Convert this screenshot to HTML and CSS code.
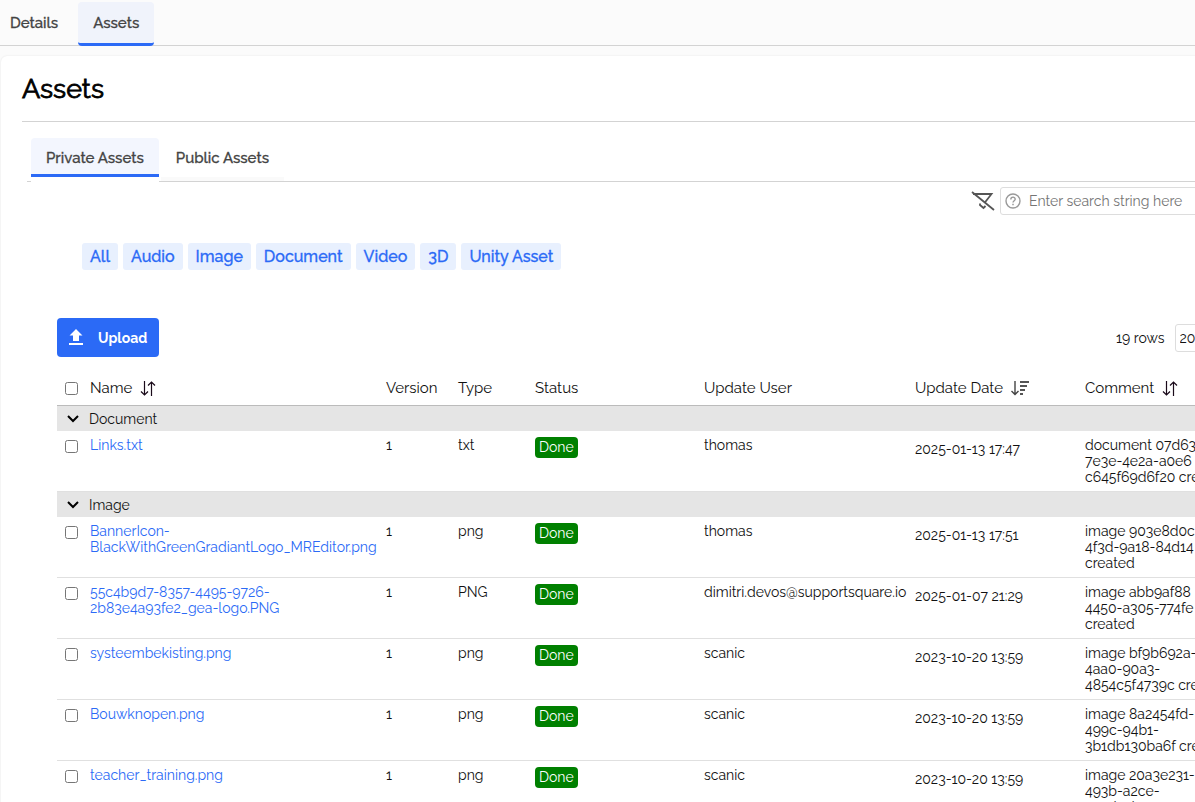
FILE: index.html
```html
<!DOCTYPE html>
<html lang="en">
<head>
<meta charset="UTF-8">
<meta name="viewport" content="width=device-width, initial-scale=1.0">
<title>Assets</title>
<link rel="stylesheet" href="styles.css">
</head>
<body>

<nav class="top-tabs">
    <a href="#details" class="top-tab">Details</a>
    <a href="#assets" class="top-tab active">Assets</a>
</nav>

<main class="panel">
    <h1>Assets</h1>

    <div class="sub-tabs">
        <button type="button" class="sub-tab active">Private Assets</button>
        <button type="button" class="sub-tab">Public Assets</button>
    </div>

    <form class="search" onsubmit="return false">
        <button type="button" class="icon-button" aria-label="Clear filter">
            <svg width="24" height="20" viewBox="0 0 24 20" fill="none" stroke="#555" stroke-width="1.800">
                <path d="M2 3H20.500L13.500 12M1 1L23 19M9 12.500V14L12.500 17L14.500 15"/>
            </svg>
        </button>
        <div class="search-box">
            <svg width="16" height="16" viewBox="0 0 16 16" fill="none" stroke="#999">
                <circle cx="8" cy="8" r="7" stroke-width="1.400"/>
                <path d="M5.800 6.400C5.800 3.400 10.300 3.500 10.200 6.200C10.100 7.700 8 7.800 8 9.600" stroke-width="1.400"/>
                <path d="M8 10.800V12.300" stroke-width="1.500"/>
            </svg>
            <input type="text" id="search" aria-label="Search" placeholder="Enter search string here">
        </div>
    </form>

    <div class="filters">
        <button type="button">All</button>
        <button type="button">Audio</button>
        <button type="button">Image</button>
        <button type="button">Document</button>
        <button type="button">Video</button>
        <button type="button">3D</button>
        <button type="button">Unity Asset</button>
    </div>

    <div class="toolbar">
        <button type="button" class="upload">
            <svg width="14" height="16" viewBox="0 0 14 16" fill="#fff">
                <path d="M7 0L13.500 6.500H10V12H4V6.500H0.500ZM0 14H14V16H0Z"/>
            </svg>
            Upload
        </button>
        <div class="paging">
            <label for="rows">19 rows</label>
            <select id="rows">
                <option>20</option>
                <option>50</option>
                <option>100</option>
            </select>
        </div>
    </div>

    <table class="assets">
        <colgroup>
            <col class="col-check">
            <col class="col-name">
            <col class="col-version">
            <col class="col-type">
            <col class="col-status">
            <col class="col-user">
            <col class="col-date">
            <col class="col-comment">
        </colgroup>
        <thead>
            <tr>
                <th class="check"><input type="checkbox" aria-label="Select all"></th>
                <th>Name
                    <svg class="sort" width="16" height="15" viewBox="0 0 16 15" fill="none" stroke="#1a0a1a" stroke-width="1.200">
                        <path d="M4.500 0V14M1 10.500L4.500 14L8 10.500M11.500 15V1M8 4.500L11.500 1L15 4.500"/>
                    </svg>
                </th>
                <th>Version</th>
                <th>Type</th>
                <th>Status</th>
                <th>Update User</th>
                <th>Update Date
                    <svg class="sort" width="18" height="15" viewBox="0 0 18 15" fill="none" stroke="#444">
                        <path d="M4 0V13M0.500 10L4 13.500L7.500 10" stroke-width="1.400"/>
                        <path d="M9 1H18M9 5H16M9 9H14M9 13H12" stroke="#555" stroke-width="1.800"/>
                    </svg>
                </th>
                <th>Comment
                    <svg class="sort" width="16" height="15" viewBox="0 0 16 15" fill="none" stroke="#1a0a1a" stroke-width="1.200">
                        <path d="M4.500 0V14M1 10.500L4.500 14L8 10.500M11.500 15V1M8 4.500L11.500 1L15 4.500"/>
                    </svg>
                </th>
            </tr>
        </thead>
        <tbody>
            <tr class="group">
                <td colspan="8">
                    <svg width="12" height="8" viewBox="0 0 12 8" fill="none" stroke="#000" stroke-width="2"><path d="M1 1L6 6L11 1"/></svg>Document
                </td>
            </tr>
            <tr>
                <td class="check"><input type="checkbox" aria-label="Select Links.txt"></td>
                <td><a href="#">Links.txt</a></td>
                <td>1</td>
                <td>txt</td>
                <td><span class="badge">Done</span></td>
                <td>thomas</td>
                <td class="date">2025-01-13 17:47</td>
                <td>document 07d63<br>7e3e-4e2a-a0e6<br>c645f69d6f20 created</td>
            </tr>
        </tbody>
        <tbody>
            <tr class="group">
                <td colspan="8">
                    <svg width="12" height="8" viewBox="0 0 12 8" fill="none" stroke="#000" stroke-width="2"><path d="M1 1L6 6L11 1"/></svg>Image
                </td>
            </tr>
            <tr>
                <td class="check"><input type="checkbox" aria-label="Select BannerIcon"></td>
                <td><a href="#">BannerIcon-<br>BlackWithGreenGradiantLogo_MREditor.png</a></td>
                <td>1</td>
                <td>png</td>
                <td><span class="badge">Done</span></td>
                <td>thomas</td>
                <td class="date">2025-01-13 17:51</td>
                <td>image 903e8d0c<br>4f3d-9a18-84d14<br>created</td>
            </tr>
            <tr>
                <td class="check"><input type="checkbox" aria-label="Select gea-logo"></td>
                <td><a href="#">55c4b9d7-8357-4495-9726-<br>2b83e4a93fe2_gea-logo.PNG</a></td>
                <td>1</td>
                <td>PNG</td>
                <td><span class="badge">Done</span></td>
                <td>dimitri.devos@supportsquare.io</td>
                <td class="date">2025-01-07 21:29</td>
                <td>image abb9af88<br>4450-a305-774fe<br>created</td>
            </tr>
            <tr>
                <td class="check"><input type="checkbox" aria-label="Select systeembekisting.png"></td>
                <td><a href="#">systeembekisting.png</a></td>
                <td>1</td>
                <td>png</td>
                <td><span class="badge">Done</span></td>
                <td>scanic</td>
                <td class="date">2023-10-20 13:59</td>
                <td>image bf9b692a-<br>4aa0-90a3-<br>4854c5f4739c created</td>
            </tr>
            <tr>
                <td class="check"><input type="checkbox" aria-label="Select Bouwknopen.png"></td>
                <td><a href="#">Bouwknopen.png</a></td>
                <td>1</td>
                <td>png</td>
                <td><span class="badge">Done</span></td>
                <td>scanic</td>
                <td class="date">2023-10-20 13:59</td>
                <td>image 8a2454fd-<br>499c-94b1-<br>3b1db130ba6f created</td>
            </tr>
            <tr>
                <td class="check"><input type="checkbox" aria-label="Select teacher_training.png"></td>
                <td><a href="#">teacher_training.png</a></td>
                <td>1</td>
                <td>png</td>
                <td><span class="badge">Done</span></td>
                <td>scanic</td>
                <td class="date">2023-10-20 13:59</td>
                <td>image 20a3e231-<br>493b-a2ce-<br>created</td>
            </tr>
        </tbody>
    </table>
</main>

</body>
</html>
```

FILE: styles.css
```css
* {
    box-sizing: border-box;
}

body {
    margin: 0;
    height: 100vh;
    overflow: hidden;
    background-color: #fbfbfb;
    color: #111;
    font-family: Raleway, Lato, sans-serif;
    font-size: 14px;
    font-variant-numeric: oldstyle-nums;
    line-height: 16px;
}

button,
input,
select {
    font-family: inherit;
    font-size: inherit;
    font-variant-numeric: inherit;
    color: inherit;
}

a {
    color: #2b6af6;
    text-decoration: none;
}

.top-tabs {
    display: flex;
    height: 46px;
    padding-top: 2px;
    border-bottom: 1px solid #d3d3d3;
}

.top-tab {
    height: 44px;
    padding: 13px 15px 0;
    border-radius: 4px;
    color: #444;
    font-size: 15px;
    font-weight: 500;
    -webkit-text-stroke: 0.3px;
}

.top-tab:first-child {
    padding-left: 10px;
    padding-right: 20px;
}

.top-tab.active {
    background-color: #f0f3fb;
    border-bottom: 3px solid #2b6af6;
}

.panel {
    min-width: 1270px;
    margin-top: 10px;
    margin-left: 1px;
    padding: 16px 0 0 21px;
    background-color: #fff;
    border-radius: 6px;
    box-shadow: 0 0 2px rgba(0, 0, 0, 0.1);
}

h1 {
    margin: 0;
    padding-bottom: 15px;
    border-bottom: 1px solid #d3d3d3;
    color: #000;
    font-size: 27px;
    font-weight: 400;
    line-height: 34px;
    -webkit-text-stroke: 0.8px;
}

.sub-tabs {
    display: flex;
    margin: 16px 0 0 5px;
    padding: 0 4px;
    height: 44px;
    border-bottom: 1px solid #d3d3d3;
}

.sub-tab {
    height: 39px;
    padding: 4px 15px 0;
    border: none;
    border-bottom: 3px solid transparent;
    border-radius: 4px 4px 0 0;
    background: none;
    box-shadow: 0 4px 0 #fafafa;
    color: #444;
    font-size: 15px;
    font-weight: 500;
    -webkit-text-stroke: 0.3px;
}

.sub-tab.active {
    margin-right: 2px;
    background-color: #f3f6fe;
    border-bottom-color: #2b6af6;
    box-shadow: 0 5px 0 #fff;
}

.search {
    display: flex;
    align-items: center;
    gap: 5px;
    margin: 5px 0 0 949px;
}

.icon-button {
    display: flex;
    padding: 0;
    border: none;
    background: none;
}

.search-box {
    display: flex;
    flex: 1;
    align-items: center;
    gap: 8px;
    height: 28px;
    padding-left: 4px;
    border: 1px solid #ddd;
    border-radius: 3px;
}

.search-box input {
    flex: 1;
    padding: 0;
    border: none;
    outline: none;
}

.search-box input::placeholder {
    color: #757575;
}

.filters {
    display: flex;
    gap: 5px;
    margin: 28px 0 0 60px;
}

.filters button {
    height: 27px;
    padding: 0 8px;
    border: none;
    border-radius: 3px;
    background-color: #e8f0fe;
    color: #2b6af6;
    font-size: 16px;
    font-weight: 500;
    -webkit-text-stroke: 0.3px;
}

.toolbar {
    display: flex;
    align-items: center;
    margin: 48px 0 0 35px;
}

.upload {
    display: flex;
    align-items: center;
    gap: 15px;
    height: 39px;
    padding: 0 12px;
    border: none;
    border-radius: 4px;
    background-color: #2b6af6;
    color: #fff;
    font-weight: bold;
}

.upload svg {
    margin-bottom: 2px;
}

.paging {
    display: flex;
    align-items: center;
    gap: 10px;
    width: 135px;
    margin-left: auto;
    margin-right: 20px;
}

.paging select {
    height: 28px;
    padding: 0;
    border: 1px solid #ddd;
    border-radius: 3px;
    background-color: #fff;
}

.assets {
    width: 1194px;
    margin: 13px 0 0 35px;
    border-collapse: separate;
    border-spacing: 0;
    table-layout: fixed;
}

.col-check { width: 29px; }
.col-name { width: 296px; }
.col-version { width: 72px; }
.col-type { width: 77px; }
.col-status { width: 169px; }
.col-user { width: 211px; }
.col-date { width: 170px; }

.assets th {
    height: 36px;
    padding: 0 4px;
    border-bottom: 1px solid #bbb;
    font-size: 15px;
    font-weight: normal;
    text-align: left;
    white-space: nowrap;
}

.assets td {
    height: 61px;
    padding: 6px 4px;
    border-bottom: 1px solid #e0e0e0;
    vertical-align: top;
    white-space: nowrap;
}

.assets .group td {
    height: 25px;
    padding: 0 10px;
    border-bottom: none;
    background-color: #e5e5e5;
    vertical-align: middle;
}

.group svg {
    margin-right: 10px;
    vertical-align: 1px;
}

.sort {
    margin-left: 4px;
    vertical-align: -3px;
}

.assets .check {
    padding-left: 8px;
    padding-right: 0;
}

.check input {
    display: block;
    width: 13px;
    height: 13px;
    margin: 3px 0 0;
}

th.check input {
    margin-top: 1px;
}

.assets .date {
    padding-top: 10px;
}

.badge {
    display: inline-block;
    padding: 2px 4px 3px;
    border-radius: 4px;
    background-color: #008000;
    color: #fff;
}
```
